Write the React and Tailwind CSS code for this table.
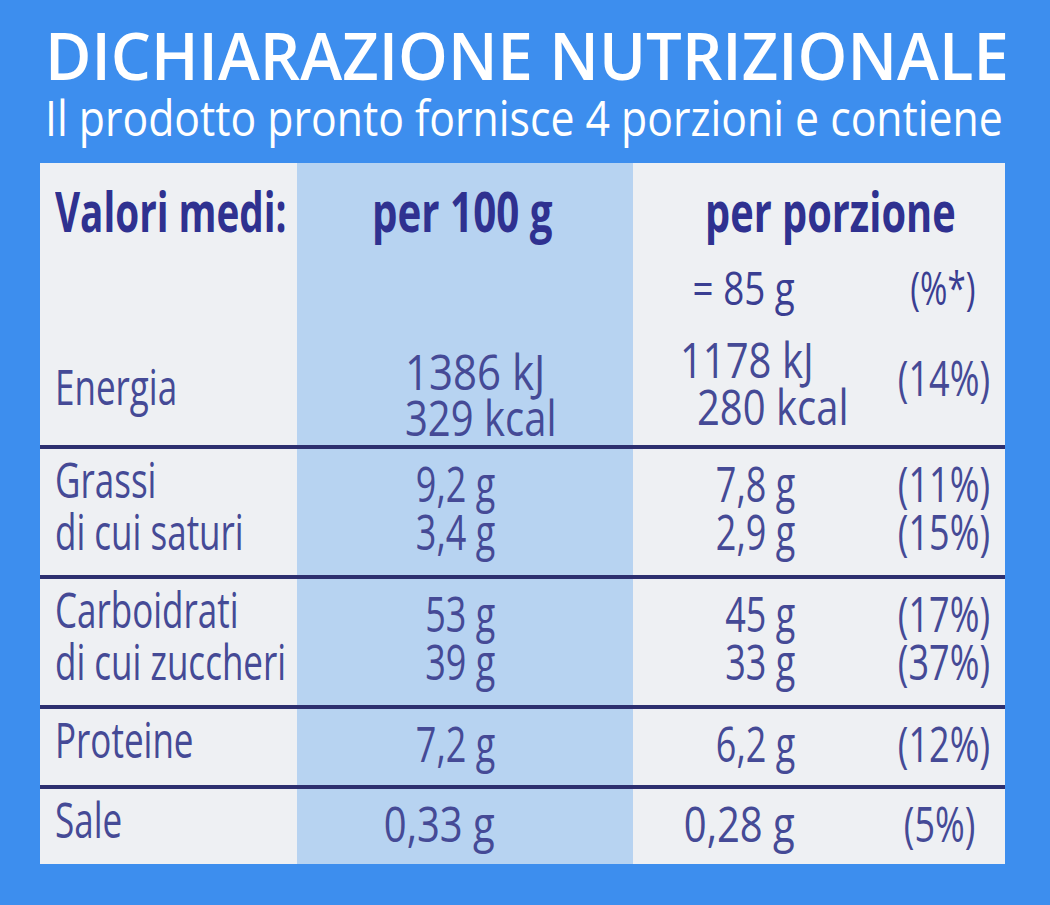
import React from 'react';

// nutrition label from a pack: three colour bands, rules between groups
const L = 'inline-block whitespace-nowrap origin-left scale-x-[0.7]';
const R = 'inline-block whitespace-nowrap origin-right scale-x-[0.72]';
const RW = 'inline-block whitespace-nowrap origin-right scale-x-[0.8]';

const label = 'bg-[#eef0f3] pl-[15px] text-[50px] leading-[52px] text-[#454a96]';
const col2 = 'bg-[#b7d3f1] pr-[138px] text-right text-[50px] leading-[48px] text-[#454a96]';
const col3 = 'bg-[#eef0f3] pr-[50px] text-right text-[50px] leading-[48px] text-[#454a96]';
const col4 = 'bg-[#eef0f3] text-right text-[50px] leading-[48px] text-[#454a96]';

const rows = [
  { name: ['Grassi', 'di cui saturi'], a: ['9,2 g', '3,4 g'], b: ['7,8 g', '2,9 g'], p: ['(11%)', '(15%)'], h: 'h-[130px]', pr: 'pr-[15px]', w: R },
  { name: ['Carboidrati', 'di cui zuccheri'], a: ['53 g', '39 g'], b: ['45 g', '33 g'], p: ['(17%)', '(37%)'], h: 'h-[130px]', pr: 'pr-[15px]', w: R },
  { name: ['Proteine'], a: ['7,2 g'], b: ['6,2 g'], p: ['(12%)'], h: 'h-[80px]', pr: 'pr-[15px]', w: R },
  { name: ['Sale'], a: ['0,33 g'], b: ['0,28 g'], p: ['(5%)'], h: 'h-[79px]', pr: 'pr-[30px]', w: RW },
];

const Lines = ({ items, cls }) => items.map((t) => (
  <div key={t}><span className={cls}>{t}</span></div>
));

export default function App() {
  return (
    <div className="w-[1050px] h-[905px] overflow-hidden bg-[#3d8eee] font-['Open_Sans',sans-serif]">
      <div className="pl-[45px] pt-[23px] text-white">
        <h1 className="text-[65px] leading-[65px] font-semibold">
          <span className="inline-block whitespace-nowrap origin-left scale-x-[0.975]">DICHIARAZIONE NUTRIZIONALE</span>
        </h1>
        <p className="mt-[4px] text-[50px] leading-[50px] font-medium">
          <span className="inline-block whitespace-nowrap origin-left scale-x-[0.855]">Il prodotto pronto fornisce 4 porzioni e contiene</span>
        </p>
      </div>

      <div className="ml-[40px] mt-[21px] w-[965px]">
        {/* header + energia */}
        <div className="grid grid-cols-[257px_336px_372px] h-[282px]">
          <div className={`${label} pt-[19px]`}>
            <div className="text-[56px] leading-[56px] font-bold text-[#2f3190]">
              <span className="inline-block whitespace-nowrap origin-left scale-x-[0.69]">Valori medi:</span>
            </div>
            <div className="mt-[125px] leading-[47px]"><span className={L}>Energia</span></div>
          </div>
          <div className="bg-[#b7d3f1] pt-[19px] text-[50px] text-[#454a96]">
            <div className="pl-[75px] text-[56px] leading-[56px] font-bold text-[#2f3190]">
              <span className="inline-block whitespace-nowrap origin-left scale-x-[0.72]">per 100 g</span>
            </div>
            <div className="mt-[110px] pl-[108px] leading-[46px]">
              <div><span className="inline-block whitespace-nowrap origin-left scale-x-[0.84]">1386 kJ</span></div>
              <div><span className="inline-block whitespace-nowrap origin-left scale-x-[0.8]">329 kcal</span></div>
            </div>
          </div>
          <div className="bg-[#eef0f3] pt-[19px] text-[#454a96]">
            <div className="pl-[72px] text-[56px] leading-[56px] font-bold text-[#2f3190]">
              <span className="inline-block whitespace-nowrap origin-left scale-x-[0.71]">per porzione</span>
            </div>
            <div className="grid grid-cols-[212px_160px] mt-[26px] text-[46px] leading-[46px] font-medium text-[#3a3e92]">
              <div className="text-right pr-[50px]"><span className="inline-block whitespace-nowrap origin-right scale-x-[0.8]">= 85 g</span></div>
              <div className="text-right pr-[30px]"><span className={R}>(%*)</span></div>
            </div>
            <div className="grid grid-cols-[212px_160px] mt-[26px] text-[50px]">
              <div className="pl-[47px] leading-[47px]">
                <div><span className="inline-block whitespace-nowrap origin-left scale-x-[0.8]">1178 kJ</span></div>
                <div className="pl-[17px]"><span className="inline-block whitespace-nowrap origin-left scale-x-[0.8]">280 kcal</span></div>
              </div>
              <div className="text-right pr-[15px] pt-[16px] leading-[50px]"><span className={R}>(14%)</span></div>
            </div>
          </div>
        </div>

        {rows.map((r) => (
          <div key={r.name[0]} className={`grid grid-cols-[257px_336px_212px_160px] border-t-[4px] border-[#2d2f6f] ${r.h}`}>
            <div className={`${label} pt-[4px]`}><Lines items={r.name} cls={L} /></div>
            <div className={`${col2} pt-[10px]`}><Lines items={r.a} cls={r.w} /></div>
            <div className={`${col3} pt-[10px]`}><Lines items={r.b} cls={r.w} /></div>
            <div className={`${col4} ${r.pr} pt-[10px]`}><Lines items={r.p} cls={R} /></div>
          </div>
        ))}
      </div>
    </div>
  );
}
